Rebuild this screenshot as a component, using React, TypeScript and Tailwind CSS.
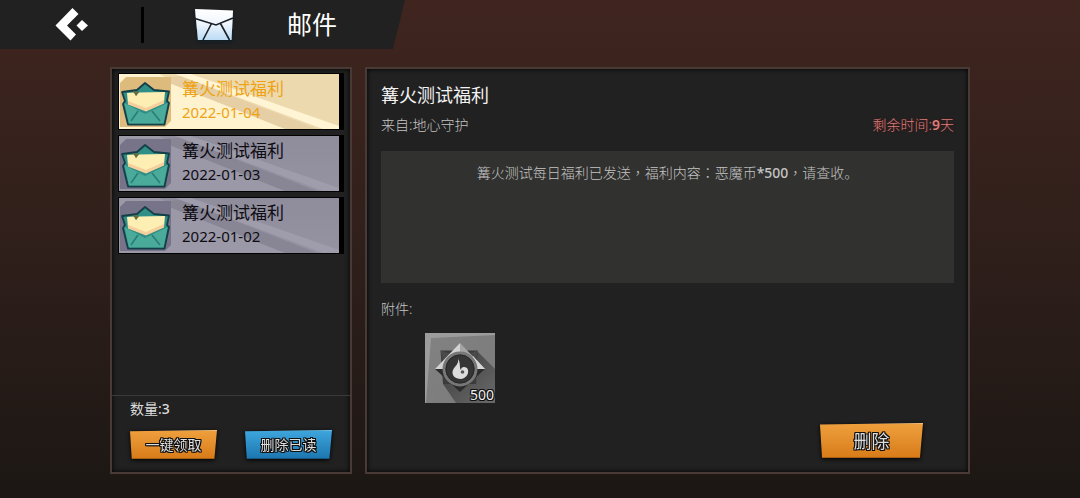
import type { ReactNode } from "react";

const mails = [
  { title: "篝火测试福利", date: "2022-01-04", active: true },
  { title: "篝火测试福利", date: "2022-01-03", active: false },
  { title: "篝火测试福利", date: "2022-01-02", active: false },
];

const outline =
  "[text-shadow:-1px_-1px_0_#111,1px_-1px_0_#111,-1px_1px_0_#111,1px_1px_0_#111,0_1px_0_#111,0_-1px_0_#111,1px_0_0_#111,-1px_0_0_#111]";

function BackIcon() {
  return (
    <svg viewBox="0 0 34 34" className="h-[34px] w-[34px]" fill="#fff" aria-hidden="true">
      <path d="M17.5 0 L23.5 6 L12 17.5 L21 26.5 L15.5 32.5 L0.5 17.5 Z" />
      <path d="M27 12 L33 17.5 L27 23 L21.5 17.5 Z" />
    </svg>
  );
}

function MailIcon() {
  return (
    <svg viewBox="0 0 44 40" className="h-10 w-11" aria-hidden="true">
      <defs>
        <linearGradient id="paper" x1="0" y1="0" x2="0" y2="1">
          <stop offset="0" stopColor="#ffffff" />
          <stop offset="0.45" stopColor="#f1f6fd" />
          <stop offset="1" stopColor="#bcdcf5" />
        </linearGradient>
        <filter id="mailShadow" x="-20%" y="-20%" width="140%" height="150%">
          <feDropShadow dx="0" dy="2" stdDeviation="1.5" floodColor="#101c28" />
        </filter>
      </defs>
      <g filter="url(#mailShadow)">
        <path d="M3 4 L41 5.5 L39.5 35 L6 35 Z" fill="url(#paper)" />
      </g>
      <path d="M3 13.5 L24 20 L41 13" fill="none" stroke="#1b2027" strokeWidth="1.6" />
      <path d="M19.5 18.5 L11 35 M28.5 18.5 L37.5 35" fill="none" stroke="#1b2027" strokeWidth="1.6" />
    </svg>
  );
}

function EnvelopeIcon({ active }: { active: boolean }) {
  return (
    <svg viewBox="0 0 52 52" className="block h-[52px] w-[52px] shrink-0" aria-hidden="true">
      <path d="M7 1 H52 V45 L46 51 H1 V7 Z" fill={active ? "#ddbb7c" : "#777489"} />
      <path d="M26 7 L35 14 L50 15.5 L48 25 L50 27 L45.5 48.5 L9 48.5 L4 28 L6 25 L3 16 L18 14 Z" fill="#2f8f86" stroke="#143f48" strokeWidth="1.8" strokeLinejoin="round" />
      <path d="M5.5 27 L26 38 L48.5 27 L44.5 47.5 L10 47.5 Z" fill="#4aab9a" />
      <path d="M19 35 L12 45 M33 35 L41 45" stroke="#2b7c79" strokeWidth="1.6" />
      <path d="M8 17 L16 16.5 L17 20 L20 16.5 L46 16 L45 27 L27 34 L9 28 Z" fill="#fdeeb4" />
      <path d="M9 25 L27 32 L45 24 L45 27.5 L27 35.5 L9 28.5 Z" fill="#f5cf9c" />
      <path d="M14 15.5 L17 20 L20 15.5 Z" fill="#6d6a35" />
    </svg>
  );
}

function MailRow({ title, date, active }: { title: string; date: string; active: boolean }) {
  return (
    <li className="bg-black py-px pr-[5px] pl-px">
      <button
        type="button"
        aria-pressed={active}
        className={
          "relative flex h-[55px] w-full items-center gap-[11px] overflow-hidden text-left " +
          (active
            ? "bg-[#edd9ae] text-[#eea314]"
            : "bg-linear-to-b from-[#8f8c9b] to-[#9592a2] text-[#0d0c12]")
        }
      >
        <svg viewBox="0 0 220 56" preserveAspectRatio="none" className="absolute inset-0 h-full w-full" aria-hidden="true">
          <path d="M52 6 L170 56 L0 56 L0 0 L40 0 Z" fill={active ? "#fff3cf" : "#9b98a8"} />
          <path d="M52 3 L62 2 L198 56 L166 56 L52 10 Z" fill={active ? "#e6cfa4" : "#888594"} />
          <path d="M56 0 L72 0 L220 53 L220 56 L204 56 Z" fill={active ? "#fff4d3" : "#9f9cab"} />
        </svg>
        <span className="relative"><EnvelopeIcon active={active} /></span>
        <span className="relative flex flex-col pb-1">
          <span className="text-[17px] leading-6">{title}</span>
          <span className="text-[15px] leading-[22px]">{date}</span>
        </span>
      </button>
    </li>
  );
}

function ActionButton({ children, color, large = false }: { children: ReactNode; color: "orange" | "blue"; large?: boolean }) {
  const fill =
    color === "orange"
      ? "bg-linear-to-b from-[#ee9f3c] to-[#d87c18] border-t-[#f9c27c] border-b-[#a85f14]"
      : "bg-linear-to-b from-[#3ea5dc] to-[#1d77b0] border-t-[#6fc3ee] border-b-[#155782]";
  const size = large ? "h-[35px] w-[103px] text-lg" : "h-[29px] w-[87px] text-sm";
  return (
    <button type="button" className="drop-shadow-[0_1px_2px_#000]">
      <span
        className={
          "flex items-center justify-center border-y text-[#dedede] [clip-path:polygon(0_4%,100%_0,97%_100%,2%_100%)] " +
          fill + " " + size + " " + outline
        }
      >
        {children}
      </span>
    </button>
  );
}

function CoinIcon() {
  return (
    <svg viewBox="0 0 70 70" className="h-full w-full" aria-hidden="true">
      <defs>
        <linearGradient id="tile" x1="0" y1="0" x2="1" y2="1">
          <stop offset="0" stopColor="#828282" />
          <stop offset="1" stopColor="#7a7a7a" />
        </linearGradient>
        <linearGradient id="shade" x1="0" y1="0" x2="1" y2="1">
          <stop offset="0" stopColor="#3c3c3c" />
          <stop offset="1" stopColor="#6a6a6a" />
        </linearGradient>
      </defs>
      <rect width="70" height="70" fill="#9c9c9c" />
      <path d="M6 5 L70 2 V70 H1 Z" fill="url(#tile)" />
      <path d="M18 51 L52 18 L70 36 V70 H31 Z" fill="url(#shade)" />
      <path d="M15.5 17.5 L52.5 17.5 L51 51 L18 51 Z" fill="#3b3b3b" />
      <path d="M15.5 17.5 L35 24 L20 36 Z M52.5 17.5 L35 24 L50 36 Z" fill="#4a4a4a" />
      <path d="M35 10 L35 36 L10 36 Z" fill="#d2d2d2" />
      <path d="M35 10 L60 36 L35 36 Z" fill="#a5a5a5" />
      <path d="M60 36 L35 36 L48 23 Z" fill="#d6d6d6" />
      <path d="M10 36 L60 36 L35 59 Z" fill="#2c2c2c" />
      <circle cx="35" cy="36" r="16" fill="#353535" stroke="#777" strokeWidth="3" />
      <circle cx="35" cy="36" r="14" fill="none" stroke="#292929" strokeWidth="1" />
      <path d="M33 26 C34 31 30 33 28 37 C26 42 30 46 36 46 C42 45 45 39 42 35 C39 33 36 34 36 37 C34 35 36 30 33 26 Z" fill="#dddddd" />
      <circle cx="37.5" cy="39" r="1.8" fill="#555" />
    </svg>
  );
}

function Mark({ children }: { children: ReactNode }) {
  return <span lang="zh-TW" className="font-['Noto_Sans_CJK_TC',sans-serif]">{children}</span>;
}

export default function App() {
  return (
    <div className="min-h-screen bg-linear-to-b from-[#40251f] via-[#2f1f1b] via-50% to-[#1c1714] font-['Noto_Sans','Noto_Sans_CJK_SC',sans-serif] text-[#c4c4c4]" lang="zh-CN">
      <header className="flex h-[49px] w-[405px] items-center bg-[#212121] pl-[55px] [clip-path:polygon(0_0,100%_0,97%_100%,0_100%)]">
        <button type="button" aria-label="返回"><BackIcon /></button>
        <span className="ml-[52px] h-9 w-[3px] bg-black" />
        <span className="ml-[48px]"><MailIcon /></span>
        <h1 className="ml-[51px] pb-px text-[25px] leading-8 text-white">邮件</h1>
      </header>

      <main className="mx-[110px] mt-[18px] flex min-h-[407px] gap-[13px]">
        <aside className="flex w-[242px] shrink-0 flex-col border-2 border-[#493a35] bg-[#212121] shadow-[inset_0_0_5px_#000]">
          <ul className="flex flex-col gap-[5px] px-[6px] pt-[4px]">
            {mails.map((mail) => (
              <MailRow key={mail.date} {...mail} />
            ))}
          </ul>
          <footer className="mt-auto border-t border-[#3a3a3a] pt-[3px] pr-[18px] pb-[13px] pl-[18px]">
            <p className="text-sm leading-5 text-[#dcdcdc]">数量:<span className="font-medium">3</span></p>
            <div className="mt-[11px] flex justify-between">
              <ActionButton color="orange">一键领取</ActionButton>
              <ActionButton color="blue">删除已读</ActionButton>
            </div>
          </footer>
        </aside>

        <article className="flex min-w-0 grow flex-col border-2 border-[#493a35] bg-[#212121] px-[14px] pt-3 pb-[14px] shadow-[inset_0_0_5px_#000]">
          <h2 className="text-lg leading-7 text-[#f2f2f2]">篝火测试福利</h2>
          <div className="mt-1 flex justify-between text-sm leading-6 font-light">
            <p>来自:地心守护</p>
            <p className="text-[#d67f7c] [text-shadow:0_0_2px_#5c1010]">剩余时间:<span className="font-semibold">9</span>天</p>
          </div>
          <p className="mt-[14px] min-h-[132px] bg-[#31312f] px-4 pt-[11px] text-center text-sm leading-5 font-light">
            篝火测试每日福利已发送<Mark>，</Mark>福利内容<Mark>：</Mark>恶魔币<span className="font-medium">*500</span><Mark>，</Mark>请查收。
          </p>
          <h3 className="mt-4 text-sm leading-5 font-light">附件:</h3>
          <div className="relative mt-[14px] ml-[44px] h-[70px] w-[70px]">
            <CoinIcon />
            <span className={"absolute right-px bottom-0 text-sm leading-4 text-[#f0f0f0] " + outline}>500</span>
          </div>
          <div className="mt-auto mr-[31px] flex justify-end">
            <ActionButton color="orange" large>删除</ActionButton>
          </div>
        </article>
      </main>
    </div>
  );
}
